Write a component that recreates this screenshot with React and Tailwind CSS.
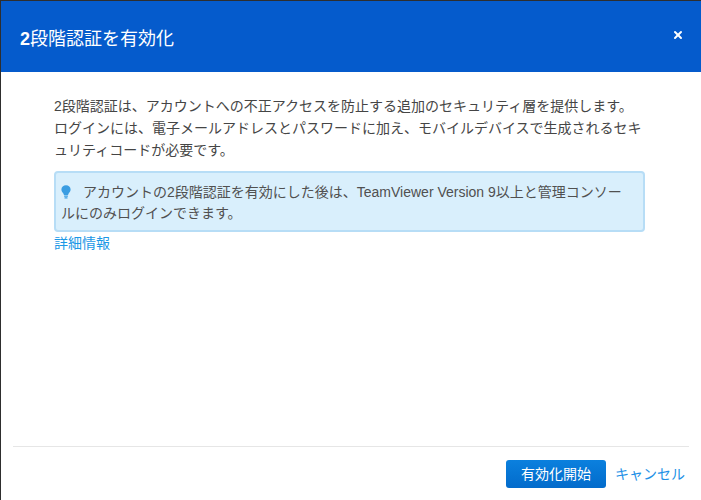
import { X } from 'lucide-react'

const FONT = '"Liberation Sans", "Noto Sans CJK JP", sans-serif'

function BulbIcon() {
  return (
    <svg className="inline-block w-[10px] h-[14px] mr-[12px] -mt-[3px] align-middle" viewBox="0 0 10 14" fill="#3a9de2">
      <path d="M5 0.3C2.4 0.3 0.4 2.2 0.4 4.6c0 1.6 0.8 2.6 1.6 3.5 0.5 0.6 0.9 1.2 0.9 1.9h4.2c0-0.7 0.4-1.3 0.9-1.9 0.8-0.9 1.6-1.9 1.6-3.5C9.6 2.2 7.6 0.3 5 0.3z" />
      <rect x="3" y="10.6" width="4" height="1.1" rx="0.4" />
      <rect x="3.4" y="12.2" width="3.2" height="1.3" rx="0.6" />
    </svg>
  )
}

export default function App() {
  return (
    <div className="w-[701px] h-[500px] bg-[#2e2e2e] pl-[1px] pt-[1px]" style={{ fontFamily: FONT }}>
      <div className="w-full h-full bg-white flex flex-col">
        {/* Header */}
        <div className="h-[71px] shrink-0 bg-[#055bcc] flex items-center justify-between pl-[19px] pr-[17px]">
          <h1 className="text-[18px] leading-[24px] text-white mt-[5px]">
            <span className="font-bold">2</span>段階認証を有効化
          </h1>
          <button aria-label="閉じる" className="text-white -mt-[3px]">
            <X size={12} strokeWidth={4} />
          </button>
        </div>

        {/* Body */}
        <div className="flex-1 pt-[23px] pl-[53px] pr-[56px] text-[14px] text-[#454545]">
          <p className="leading-[22px]">
            2段階認証は、アカウントへの不正アクセスを防止する追加のセキュリティ層を提供します。<br />
            ログインには、電子メールアドレスとパスワードに加え、モバイルデバイスで生成されるセキ<br />
            ュリティコードが必要です。
          </p>

          <div className="mt-[10px] rounded-[4px] border-2 border-[#b7ddf6] bg-[#d9effc] pl-[5px] pt-[9px] pb-[6px] leading-[21px] text-[#505050]">
            <BulbIcon />
            アカウントの2段階認証を有効にした後は、TeamViewer Version 9以上と管理コンソー<br />
            ルにのみログインできます。
          </div>

          <a href="#" className="block leading-[22px] text-[#1c98e6] w-fit">詳細情報</a>
        </div>

        {/* Footer */}
        <div className="mx-3 border-t border-[#e6e6e6] pt-[13px] pb-[12px] flex items-center justify-end gap-[9px] pr-[4px]">
          <button className="w-[100px] h-[28px] rounded-[3px] bg-gradient-to-b from-[#0b80de] to-[#036bcb] text-white text-[14px]">
            有効化開始
          </button>
          <a href="#" className="text-[14px] text-[#2290e6]">キャンセル</a>
        </div>
      </div>
    </div>
  )
}
